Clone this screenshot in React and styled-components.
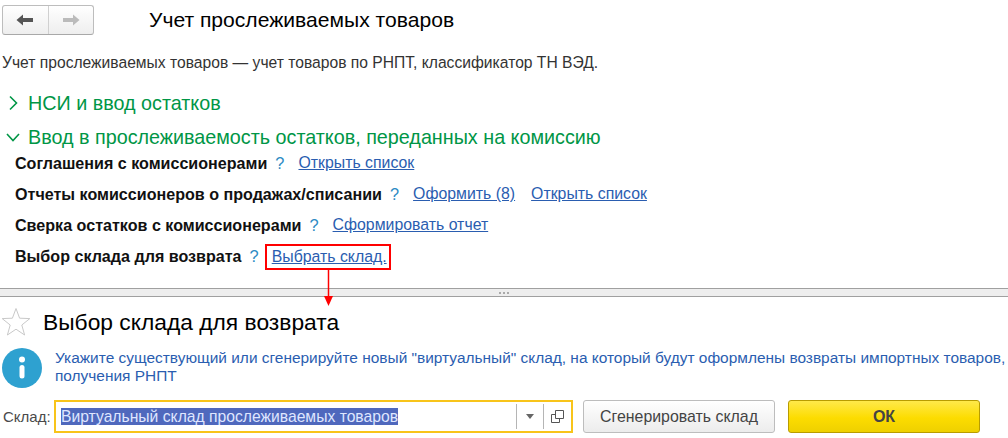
import React from 'react';
import styled, { createGlobalStyle } from 'styled-components';

const Global = createGlobalStyle`
  html, body { margin: 0; padding: 0; background: #fff; }
  body { font-family: "Liberation Sans", Arial, sans-serif; width: 1008px; height: 438px; overflow: hidden; }
`;
const Page = styled.div`display: flex; flex-direction: column; width: 1008px; height: 438px; overflow: hidden; position: relative;`;
const TopPane = styled.div`height: 288px; display: flex; flex-direction: column; flex: none;`;
const Header = styled.div`display: flex; align-items: center; height: 35px; box-sizing: border-box; padding: 5px 0 0 2px; flex: none;`;
const NavGroup = styled.div`
  display: flex; width: 92px; height: 30px; box-sizing: border-box; border: 1px solid #bdbdbd; border-bottom-color: #a8a8a8;
  border-radius: 3px; background: linear-gradient(#fff, #eeeeee);
`;
const NavBtn = styled.div`
  flex: 1; display: flex; align-items: center; justify-content: center;
  & + & { border-left: 1px solid #d0d0d0; }
`;
const Title = styled.h1`margin: 0 0 0 ${p => p.$ml}px; font-weight: 400; font-size: ${p => p.$size}px; color: #000; white-space: nowrap;`;
const Desc = styled.div`margin: 19px 0 0 2px; font-size: 15.65px; line-height: 18px; color: #333; white-space: nowrap;`;
const Section = styled.div`
  display: flex; align-items: center; height: 22px; margin-top: ${p => p.$mt}px; font-size: 19.75px; color: #009646; white-space: nowrap; padding-left: ${p => p.$pl}px;
  svg { flex: none; margin-right: ${p => p.$gap}px; }
`;
const Rows = styled.div`display: flex; flex-direction: column; gap: 13px; margin-top: 6px; padding-left: 15px;`;
const Row = styled.div`display: flex; align-items: center; height: 18px; font-size: 15.85px; white-space: nowrap;`;
const Label = styled.b`color: #111; font-weight: 700; font-size: 16.1px;`;
const Help = styled.span`color: #2e8bc4; margin: 0 14px 0 8px; font-size: 16.4px;`;
const Link = styled.a`color: #2a5db0; text-decoration: underline; margin-right: ${p => p.$mr || 0}px;`;
const Boxed = styled.span`
  display: inline-flex; align-items: center; height: 26px; box-sizing: border-box; border: 2px solid #f00; padding: 0 2px 0 5px; margin-left: -8px; margin-top: 1px;
`;
const Splitter = styled.div`
  height: 9px; flex: none; box-sizing: border-box; background: #eeeeee; border-top: 1px solid #a0a0a0; border-bottom: 1px solid #a0a0a0;
  display: flex; align-items: center; justify-content: center; gap: 2px;
`;
const Dot = styled.i`width: 2px; height: 2px; background: #aaa; display: block;`;
const Arrow = styled.svg`position: absolute; left: 323.5px; top: 268px; overflow: visible;`;
const TitleRow = styled.div`display: flex; align-items: center; height: 34px; margin-top: 8px; padding-left: 1px; flex: none;
  svg { flex: none; }
`;
const Info = styled.div`display: flex; margin-top: 9px; padding-left: 2px; flex: none;
  svg { flex: none; }
`;
const InfoText = styled.div`margin-left: 13px; font-size: 15.45px; line-height: 18px; color: #2a5db0; white-space: nowrap; padding-top: 1px;`;
const FieldRow = styled.div`display: flex; align-items: center; margin-top: 12px; padding-left: 3px; flex: none;`;
const FieldLabel = styled.span`font-size: 15px; color: #4a4a4a; width: 51px; flex: none;`;
const Field = styled.div`
  display: flex; align-items: center; width: 519px; height: 33px; box-sizing: border-box; border: 2px solid #f8c41a; padding-left: 5px; flex: none;
`;
const Input = styled.div`flex: 1; font-size: 15.7px; line-height: 17px;`;
const Selected = styled.span`background: #4f68bd; color: #dfe6ff; display: inline-block; height: 17px;`;
const FieldBtn = styled.div`
  width: ${p => p.$w}px; height: 25px; border-left: 1px solid #b5b5b5; display: flex; align-items: center; justify-content: center; flex: none;
`;
const Btn = styled.div`
  display: flex; align-items: center; justify-content: center; height: 33px; box-sizing: border-box; border-radius: 3px; flex: none;
  width: ${p => p.$w}px; margin-left: ${p => p.$ml}px; font-size: ${p => p.$size}px; font-weight: ${p => p.$bold ? 700 : 400};
  border: 1px solid ${p => p.$bc}; background: ${p => p.$bg}; color: #444;
`;

export default function App() {
  return (
    <Page>
      <Global />
      <TopPane>
        <Header>
          <NavGroup>
            <NavBtn>
              <svg width="18" height="12" viewBox="0 0 18 12"><path d="M7 0.5 L0.5 6 L7 11.5 V8 H17 V4 H7Z" fill="#555" /></svg>
            </NavBtn>
            <NavBtn>
              <svg width="18" height="12" viewBox="0 0 18 12"><path d="M11 0.5 L17.5 6 L11 11.5 V8 H1 V4 H11Z" fill="#bbb" /></svg>
            </NavBtn>
          </NavGroup>
          <Title $ml={55} $size={21.1}>Учет прослеживаемых товаров</Title>
        </Header>
        <Desc>Учет прослеживаемых товаров — учет товаров по РНПТ, классификатор ТН ВЭД.</Desc>
        <Section $mt={20} $pl={9} $gap={10}>
          <svg width="9" height="16" viewBox="0 0 9 16"><path d="M1 1.5 L7.5 8 L1 14.5" fill="none" stroke="#009646" strokeWidth="1.6" /></svg>
          НСИ и ввод остатков
        </Section>
        <Section $mt={12} $pl={6} $gap={8}>
          <svg width="14" height="9" viewBox="0 0 14 9"><path d="M1 1 L7 7.5 L13 1" fill="none" stroke="#009646" strokeWidth="1.6" /></svg>
          Ввод в прослеживаемость остатков, переданных на комиссию
        </Section>
        <Rows>
          <Row><Label>Соглашения с комиссионерами</Label><Help>?</Help><Link>Открыть список</Link></Row>
          <Row><Label>Отчеты комиссионеров о продажах/списании</Label><Help>?</Help><Link $mr={16}>Оформить (8)</Link><Link>Открыть список</Link></Row>
          <Row><Label>Сверка остатков с комиссионерами</Label><Help>?</Help><Link>Сформировать отчет</Link></Row>
          <Row><Label>Выбор склада для возврата</Label><Help>?</Help><Boxed><Link>Выбрать склад.</Link></Boxed></Row>
        </Rows>
      </TopPane>
      <Splitter><Dot /><Dot /><Dot /></Splitter>
      <TitleRow>
        <svg width="30" height="30" viewBox="0 0 30 30"><path d="M15 1.5 L18.6 11.2 L28.8 11.6 L20.8 18 L23.6 28 L15 22.2 L6.4 28 L9.2 18 L1.2 11.6 L11.4 11.2Z" fill="none" stroke="#c9c9c9" strokeWidth="1" /></svg>
        <Title $ml={12} $size={22.8}>Выбор склада для возврата</Title>
      </TitleRow>
      <Info>
        <svg width="40" height="40" viewBox="0 0 40 40">
          <circle cx="20" cy="20" r="20" fill="#2ea1d0" />
          <circle cx="20" cy="11.5" r="3" fill="#fff" />
          <rect x="17.5" y="17" width="5" height="13.5" rx="2.5" fill="#fff" />
        </svg>
        <InfoText>Укажите существующий или сгенерируйте новый "виртуальный" склад, на который будут оформлены возвраты импортных товаров,<br />получения РНПТ</InfoText>
      </Info>
      <FieldRow>
        <FieldLabel>Склад:</FieldLabel>
        <Field>
          <Input><Selected>Виртуальный склад прослеживаемых товаров</Selected></Input>
          <FieldBtn $w={26}>
            <svg width="8" height="5" viewBox="0 0 8 5"><path d="M0 0 H8 L4 5Z" fill="#666" /></svg>
          </FieldBtn>
          <FieldBtn $w={27}>
            <svg width="13" height="13" viewBox="0 0 13 13"><path d="M4.5 0.5 H12.5 V8.5 H4.5Z M4.5 4.5 H0.5 V12.5 H8.5 V8.5" fill="none" stroke="#555" /></svg>
          </FieldBtn>
        </Field>
        <Btn $w={192} $ml={10} $size={15.9} $bc="#bdbdbd" $bg="linear-gradient(#fff, #ececec)">Сгенерировать склад</Btn>
        <Btn $w={192} $ml={13} $size={16} $bold $bc="#b89c00" $bg="linear-gradient(#ffe94a, #fcdc00 55%, #eed000)">ОК</Btn>
      </FieldRow>
      <Arrow width="10" height="40" viewBox="0 0 10 40">
        <path d="M4.5 0 V28" stroke="#f00" strokeWidth="1.5" />
        <path d="M0 28 H9 L4.5 38Z" fill="#f00" />
      </Arrow>
    </Page>
  );
}
